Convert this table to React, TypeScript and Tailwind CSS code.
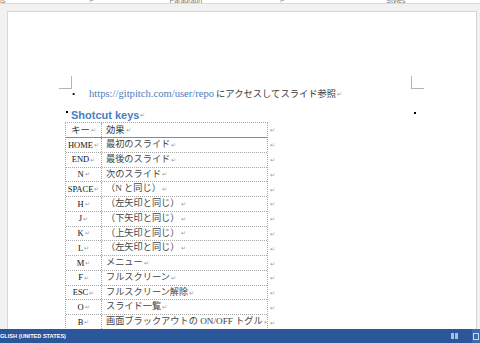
import React from "react";

const rows: [string, string][] = [
  ["HOME", "最初のスライド"],
  ["END", "最後のスライド"],
  ["N", "次のスライド"],
  ["SPACE", "（N と同じ）"],
  ["H", "（左矢印と同じ）"],
  ["J", "（下矢印と同じ）"],
  ["K", "（上矢印と同じ）"],
  ["L", "（左矢印と同じ）"],
  ["M", "メニュー"],
  ["F", "フルスクリーン"],
  ["ESC", "フルスクリーン解除"],
  ["O", "スライド一覧"],
  ["B", "画面ブラックアウトの ON/OFF トグル"],
];

const Mark = () => (
  <span className="text-[6px] text-[#9a9a9a] leading-none ml-[1px] align-middle">↵</span>
);

export default function App() {
  return (
    <div
      className="w-[480px] h-[343px] overflow-hidden flex flex-col bg-[#f1f1f1]"
      style={{ fontFamily: '"Liberation Serif", "Noto Sans CJK JP", serif' }}
    >
      {/* ribbon labels (mostly cut off) */}
      <div className="h-[4px] shrink-0 bg-white border-b border-[#dadada] overflow-hidden relative">
        <div className="flex items-end h-[4px] text-[7px] leading-[7px] text-[#777] whitespace-nowrap" style={{ fontFamily: '"Liberation Sans", sans-serif' }}>
          <span className="ml-[0px]">ts</span>
          <span className="ml-[84px]">⌐</span>
          <span className="ml-[76px]">Paragraph</span>
          <span className="ml-[78px]">⌐</span>
          <span className="ml-[102px]">Styles</span>
        </div>
      </div>

      {/* document area */}
      <div className="flex-1 overflow-hidden pl-[7px] pr-[3px] pt-[7px] flex">
        <div className="relative flex-1 bg-white border border-[#d6d6d6] border-b-0 pt-[75px] pl-[63px]">
          {/* crop marks */}
          <div className="absolute left-[51px] top-[64px] w-[13px] h-[13px] border-r border-b border-[#b4b4b4]" />
          <div className="absolute left-[403px] top-[64px] w-[13px] h-[13px] border-l border-b border-[#b4b4b4]" />
          <div className="absolute left-[406px] top-[100px] w-[2px] h-[2px] bg-black" />

          {/* bullet line */}
          <div className="h-[14px] flex items-center whitespace-nowrap">
            <span className="w-[18px] pl-[1px] text-[9px] text-black leading-none">•</span>
            <span className="text-[10.6px] text-[#4a7ebb] leading-none">https://gitpitch.com/user/repo</span>
            <span className="ml-[2px] text-[9.3px] text-[#3a3a3a] leading-none" style={{ fontFamily: '"Noto Sans CJK JP", sans-serif' }}>
              にアクセスしてスライド参照
            </span>
            <Mark />
          </div>

          {/* heading */}
          <div className="mt-[7px] h-[14px] flex items-center relative">
            <span className="absolute left-[-5px] top-[3px] w-[2px] h-[2px] bg-black" />
            <span
              className="text-[11px] font-bold text-[#4a80c4] leading-none"
              style={{ fontFamily: '"Liberation Sans", sans-serif' }}
            >
              Shotcut keys
            </span>
            <Mark />
          </div>

          {/* table */}
          <div className="ml-[-6px] flex">
            <div className="w-[203px] shrink-0 border-l border-r border-t border-dotted border-[#a8a8a8]">
              <div className="h-[15px] flex border-b border-[#8a8a8a]">
                <div className="w-[36px] shrink-0 border-r border-dotted border-[#a8a8a8] flex items-center justify-center text-[9.3px] text-[#333]" style={{ fontFamily: '"Noto Sans CJK JP", sans-serif' }}>
                  キー<Mark />
                </div>
                <div className="flex-1 flex items-center pl-[4px] text-[9.3px] text-[#333]" style={{ fontFamily: '"Noto Sans CJK JP", sans-serif' }}>
                  効果<Mark />
                </div>
              </div>
              {rows.map(([k, v]) => (
                <div key={k} className="h-[14.77px] flex border-b border-dotted border-[#a8a8a8]">
                  <div className="w-[36px] shrink-0 border-r border-dotted border-[#a8a8a8] flex items-center justify-center text-[8.5px] text-[#111] whitespace-nowrap">
                    {k}
                    <Mark />
                  </div>
                  <div className="flex-1 min-w-0 overflow-hidden flex items-center pl-[4px] text-[9.2px] text-[#444] whitespace-nowrap">
                    {v}
                    <Mark />
                  </div>
                </div>
              ))}
            </div>
            <div className="flex flex-col">
              <div className="h-[16px] flex items-center pl-[1px]"><Mark /></div>
              {rows.map(([k]) => (
                <div key={k} className="h-[14.77px] flex items-center pl-[1px]"><Mark /></div>
              ))}
            </div>
          </div>
        </div>
      </div>

      {/* status bar */}
      <div className="h-[14px] shrink-0 bg-[#2b579a] flex items-center">
        <span className="text-[5.6px] font-bold text-white whitespace-nowrap" style={{ fontFamily: '"Liberation Sans", sans-serif' }}>
          GLISH (UNITED STATES)
        </span>
        <div className="flex-1" />
        <div className="flex items-center gap-[1px] mr-[14px]">
          <div className="w-[3px] h-[6px] bg-[#a9bfe0]" />
          <div className="w-[3px] h-[6px] bg-[#a9bfe0]" />
        </div>
        <div className="w-[8px] h-[14px] bg-[#3d6aad] flex items-center justify-center">
          <div className="w-[6px] h-[7px] border border-[#c9d7ee]" />
        </div>
      </div>
    </div>
  );
}
